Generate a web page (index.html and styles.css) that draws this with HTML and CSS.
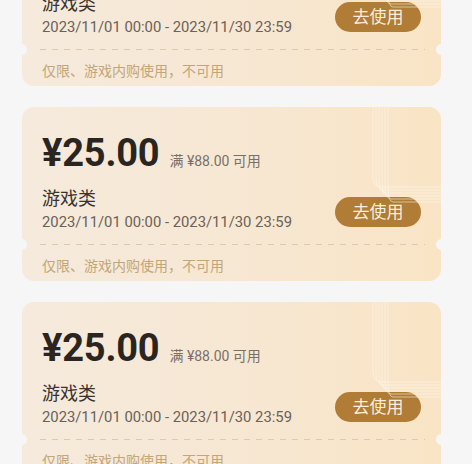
FILE: index.html
```html
<!DOCTYPE html>
<html lang="zh">
<head>
<meta charset="utf-8">
<link rel="stylesheet" href="styles.css">
</head>
<body>
<div class="list">
  <div class="card">
    <svg class="deco" width="90" height="110" viewBox="0 0 90 110"><g fill="none" stroke="#fffaf0" stroke-width="0.8" opacity="0.7"><path d="M22 0 V70 Q22 80 32 80 H90"/><path d="M25 0 V72 Q25 83 34 83 H90"/><path d="M28 0 V74 Q28 86 36 86 H90"/><path d="M31 0 V76 Q31 89 38 89 H90"/><path d="M34 0 V78 Q34 92 40 92 H90"/><path d="M37 0 V80 Q37 95 42 95 H90"/></g></svg>
    <div class="top">
      <div class="price-row"><span class="price">¥25.00</span><span class="cond">满 ¥88.00 可用</span></div>
      <div class="body">
        <div class="info"><div class="title">游戏类</div><div class="date">2023/11/01 00:00 - 2023/11/30 23:59</div></div>
        <div class="btn">去使用</div>
      </div>
    </div>
    <div class="divider"></div>
    <div class="note">仅限、游戏内购使用，不可用</div>
  </div>
  <div class="card">
    <svg class="deco" width="90" height="110" viewBox="0 0 90 110"><g fill="none" stroke="#fffaf0" stroke-width="0.8" opacity="0.7"><path d="M22 0 V70 Q22 80 32 80 H90"/><path d="M25 0 V72 Q25 83 34 83 H90"/><path d="M28 0 V74 Q28 86 36 86 H90"/><path d="M31 0 V76 Q31 89 38 89 H90"/><path d="M34 0 V78 Q34 92 40 92 H90"/><path d="M37 0 V80 Q37 95 42 95 H90"/></g></svg>
    <div class="top">
      <div class="price-row"><span class="price">¥25.00</span><span class="cond">满 ¥88.00 可用</span></div>
      <div class="body">
        <div class="info"><div class="title">游戏类</div><div class="date">2023/11/01 00:00 - 2023/11/30 23:59</div></div>
        <div class="btn">去使用</div>
      </div>
    </div>
    <div class="divider"></div>
    <div class="note">仅限、游戏内购使用，不可用</div>
  </div>
  <div class="card">
    <svg class="deco" width="90" height="110" viewBox="0 0 90 110"><g fill="none" stroke="#fffaf0" stroke-width="0.8" opacity="0.7"><path d="M22 0 V70 Q22 80 32 80 H90"/><path d="M25 0 V72 Q25 83 34 83 H90"/><path d="M28 0 V74 Q28 86 36 86 H90"/><path d="M31 0 V76 Q31 89 38 89 H90"/><path d="M34 0 V78 Q34 92 40 92 H90"/><path d="M37 0 V80 Q37 95 42 95 H90"/></g></svg>
    <div class="top">
      <div class="price-row"><span class="price">¥25.00</span><span class="cond">满 ¥88.00 可用</span></div>
      <div class="body">
        <div class="info"><div class="title">游戏类</div><div class="date">2023/11/01 00:00 - 2023/11/30 23:59</div></div>
        <div class="btn">去使用</div>
      </div>
    </div>
    <div class="divider"></div>
    <div class="note">仅限、游戏内购使用，不可用</div>
  </div>
</div>
</body>
</html>
```
FILE: styles.css
```css
html, body {
  margin: 0;
  padding: 0;
  background: #f6f6f6;
  font-family: Roboto, "Noto Sans CJK SC", sans-serif;
  overflow: hidden;
}
.list {
  margin-top: -88px;
  margin-left: 22px;
  width: 419px;
  display: flex;
  flex-direction: column;
  gap: 21px;
}
.card {
  position: relative;
  height: 174px;
  box-sizing: border-box;
  border-radius: 12px;
  overflow: hidden;
  background: linear-gradient(90deg, #f5eadc 0%, #f7e7d2 55%, #f9e4c5 100%);
}
.card::before, .card::after {
  content: "";
  position: absolute;
  top: 132px;
  width: 11px;
  height: 11px;
  border-radius: 50%;
  background: #f6f6f6;
}
.card::before { left: -6px; }
.card::after { right: -6px; }
.deco {
  position: absolute;
  top: 0;
  right: 0;
}
.top {
  padding: 24px 20px 0 20px;
}
.price-row {
  display: flex;
  align-items: baseline;
  gap: 10px;
  height: 44px;
}
.price {
  font-size: 38px;
  line-height: 44px;
  font-weight: 700;
  color: #2a2521;
  letter-spacing: -0.2px;
}
.cond {
  font-size: 14px;
  color: #7a7069;
}
.body {
  display: flex;
  justify-content: space-between;
  margin-top: 12px;
}
.title {
  font-size: 18px;
  line-height: 24px;
  color: #3a332d;
}
.date {
  font-size: 14.8px;
  line-height: 22px;
  color: #6a6159;
}
.btn {
  align-self: flex-end;
  margin-bottom: 6px;
  width: 86px;
  height: 30px;
  border-radius: 15px;
  background: #b07c36;
  color: #fcefdc;
  font-size: 17px;
  line-height: 30px;
  text-align: center;
}
.divider {
  margin: 11px 16px 0 18px;
  height: 1px;
  background-image: repeating-linear-gradient(90deg, #d9cab2 0 6px, transparent 6px 12px);
}
.note {
  padding: 11px 20px 0 20px;
  font-size: 14px;
  line-height: 20px;
  color: #c2a679;
}
```
